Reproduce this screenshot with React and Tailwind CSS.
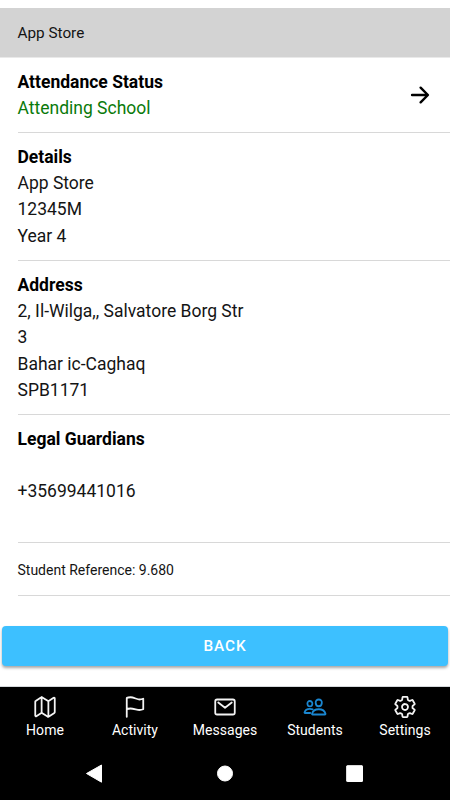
import {
  IoArrowForward,
  IoFlagOutline,
  IoMailOutline,
  IoMapOutline,
  IoPeopleOutline,
  IoSettingsOutline,
} from 'react-icons/io5'

const sections = [
  { title: 'Details', height: 'h-[128px]', lines: ['App Store', '12345M', 'Year 4'] },
  {
    title: 'Address',
    height: 'h-[154px]',
    lines: ['2, Il-Wilga,, Salvatore Borg Str', '3', 'Bahar ic-Caghaq', 'SPB1171'],
  },
  { title: 'Legal Guardians', height: 'h-[128px]', lines: ['\u00a0', '+35699441016'] },
]

const tabs = [
  { label: 'Home', Icon: IoMapOutline },
  { label: 'Activity', Icon: IoFlagOutline },
  { label: 'Messages', Icon: IoMailOutline },
  { label: 'Students', Icon: IoPeopleOutline, active: true },
  { label: 'Settings', Icon: IoSettingsOutline },
]

function Section({ title, height, lines }) {
  return (
    <section className={`ml-[17.5px] pt-[11px] border-b border-[#d8d8d8] ${height}`}>
      <h2 className="font-bold text-black">{title}</h2>
      {lines.map((line) => (
        <p key={line}>{line}</p>
      ))}
    </section>
  )
}

function TabBar() {
  return (
    <nav className="h-[59px] grid grid-cols-5 border-t border-[#d5d9dc] bg-black text-white">
      {tabs.map(({ label, Icon, active }) => (
        <div key={label} className="flex flex-col items-center pt-[8px]">
          <Icon className={`size-6 [&_*]:[stroke-width:38px] ${active ? 'text-[#1a86d0]' : 'text-[#f4f4f4]'}`} />
          <span className="mt-[2px] text-[14px] leading-[18px] tracking-[0.03px]">{label}</span>
        </div>
      ))}
    </nav>
  )
}

function SystemBar() {
  return (
    <div className="flex-1 bg-black">
      <svg viewBox="0 0 450 54" className="w-full h-[54px]" fill="#fff" stroke="#fff" strokeLinejoin="round">
        <path d="M86.5 28.5 101.5 20v17.2Z" />
        <circle cx="225" cy="28.5" r="7.5" />
        <rect x="346.7" y="20.7" width="15.8" height="15.8" rx="0.5" />
      </svg>
    </div>
  )
}

export default function App() {
  return (
    <div className="w-[450px] h-[800px] flex flex-col overflow-hidden bg-white text-[#141414] font-['Roboto',sans-serif] text-[17.5px] leading-[26.2px]">
      <header className="mt-2 h-[50px] shrink-0 flex items-center pt-px pl-[17.5px] bg-[#d3d3d3] border-b border-[#e9e9e9] text-[15.3px]">
        App Store
      </header>

      <main className="h-[628px] shrink-0">
        <section className="ml-[17.5px] h-[75px] pt-[11px] pr-[17px] flex justify-between border-b border-[#d8d8d8]">
          <div>
            <h2 className="font-bold text-black">Attendance Status</h2>
            <p className="text-[#0a7a0a]">Attending School</p>
          </div>
          <IoArrowForward className="mt-[13px] size-[26px] text-black" />
        </section>

        {sections.map((section) => (
          <Section key={section.title} {...section} />
        ))}

        <div className="ml-[17.5px] h-[53px] flex items-center pt-[2px] border-b border-[#d8d8d8] text-[14px]">
          Student Reference: 9.680
        </div>

        <button className="mt-[30px] mx-[2px] w-[446px] h-[40px] rounded-[4px] bg-[#3dc0ff] text-white text-[15.3px] font-medium tracking-[0.92px] shadow-[0_2px_3px_rgba(0,0,0,0.35)]">
          BACK
        </button>
      </main>

      <TabBar />
      <SystemBar />
    </div>
  )
}
